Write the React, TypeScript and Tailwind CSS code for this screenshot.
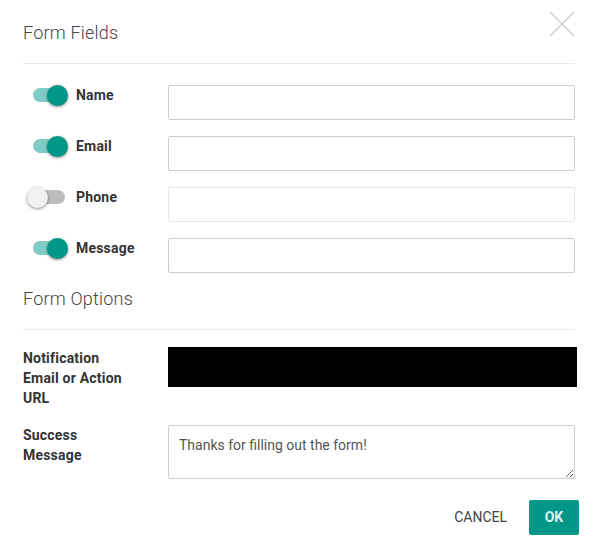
const fields = [
  { name: "Name", on: true },
  { name: "Email", on: true },
  { name: "Phone", on: false },
  { name: "Message", on: true },
];

function Toggle({ on }: { on: boolean }) {
  return (
    <div className="relative w-[42px] h-[20px] ml-[4px]">
      <div
        className={
          "absolute left-[6px] top-[3px] w-[32px] h-[14px] rounded-full " +
          (on ? "bg-[#80cbc4]" : "bg-[#bdbdbd]")
        }
      />
      <div
        className={
          "absolute top-0 w-[21px] h-[21px] rounded-full shadow-[0_1px_3px_rgba(0,0,0,0.45)] " +
          (on ? "left-[20px] bg-[#009688]" : "left-0 bg-[#f1f1f1]")
        }
      />
    </div>
  );
}

export default function App() {
  return (
    <div
      className="w-[595px] h-[550px] bg-white relative text-[#333]"
      style={{ fontFamily: "Roboto, 'Liberation Sans', sans-serif" }}
    >
      <button className="absolute right-[20px] top-[11px] w-[26px] h-[26px]">
        <svg viewBox="0 0 26 26" className="w-[26px] h-[26px]">
          <path d="M1 1 L25 25 M25 1 L1 25" stroke="#cfcfcf" strokeWidth="1.6" fill="none" />
        </svg>
      </button>

      <div className="pl-[23px] pr-[20px] pt-[21px]">
        <h2 className="text-[18px] leading-[24px] font-light text-[#444] tracking-[0.2px]">Form Fields</h2>
        <div className="mt-[18px] border-t border-[#eaeaea]" />

        <div className="mt-[21px] flex flex-col gap-[16px]">
          {fields.map((f) => (
            <div key={f.name} className="flex items-start">
              <div className="w-[145px] flex items-center gap-[7px]">
                <Toggle on={f.on} />
                <span className="text-[14px] font-bold leading-[18px] text-[#333] tracking-[0.2px]">{f.name}</span>
              </div>
              <input
                disabled={!f.on}
                className={
                  "flex-1 h-[35px] rounded-[2px] border bg-white " +
                  (f.on ? "border-[#cccccc]" : "border-[#e6e6e6]")
                }
              />
            </div>
          ))}
        </div>

        <h2 className="mt-[14px] text-[18px] leading-[24px] font-light text-[#444] tracking-[0.2px]">Form Options</h2>
        <div className="mt-[18px] border-t border-[#eaeaea]" />

        <div className="mt-[17px] flex items-start">
          <div className="w-[145px] pt-[1px]">
            <span className="block w-[112px] text-[14px] font-bold leading-[20px] tracking-[0.2px]">
              Notification Email or Action URL
            </span>
          </div>
          <div className="flex-1 h-[40px] bg-black mr-[-2px]" />
        </div>

        <div className="mt-[17px] flex items-start">
          <div className="w-[145px] pt-[0px]">
            <span className="block w-[100px] text-[14px] font-bold leading-[20px] tracking-[0.2px]">
              Success Message
            </span>
          </div>
          <textarea
            className="flex-1 h-[54px] rounded-[2px] border border-[#cccccc] px-[10px] py-[9px] text-[14px] leading-[20px] text-[#555] resize-y"
            defaultValue="Thanks for filling out the form!"
          />
        </div>

        <div className="mt-[21px] flex justify-end items-center gap-[22px] mr-[-4px]">
          <button className="text-[14px] text-[#444] uppercase">Cancel</button>
          <button className="w-[50px] h-[35px] rounded-[2px] bg-[#009688] text-[#e0f2f1] text-[14px] font-bold">
            OK
          </button>
        </div>
      </div>
    </div>
  );
}
